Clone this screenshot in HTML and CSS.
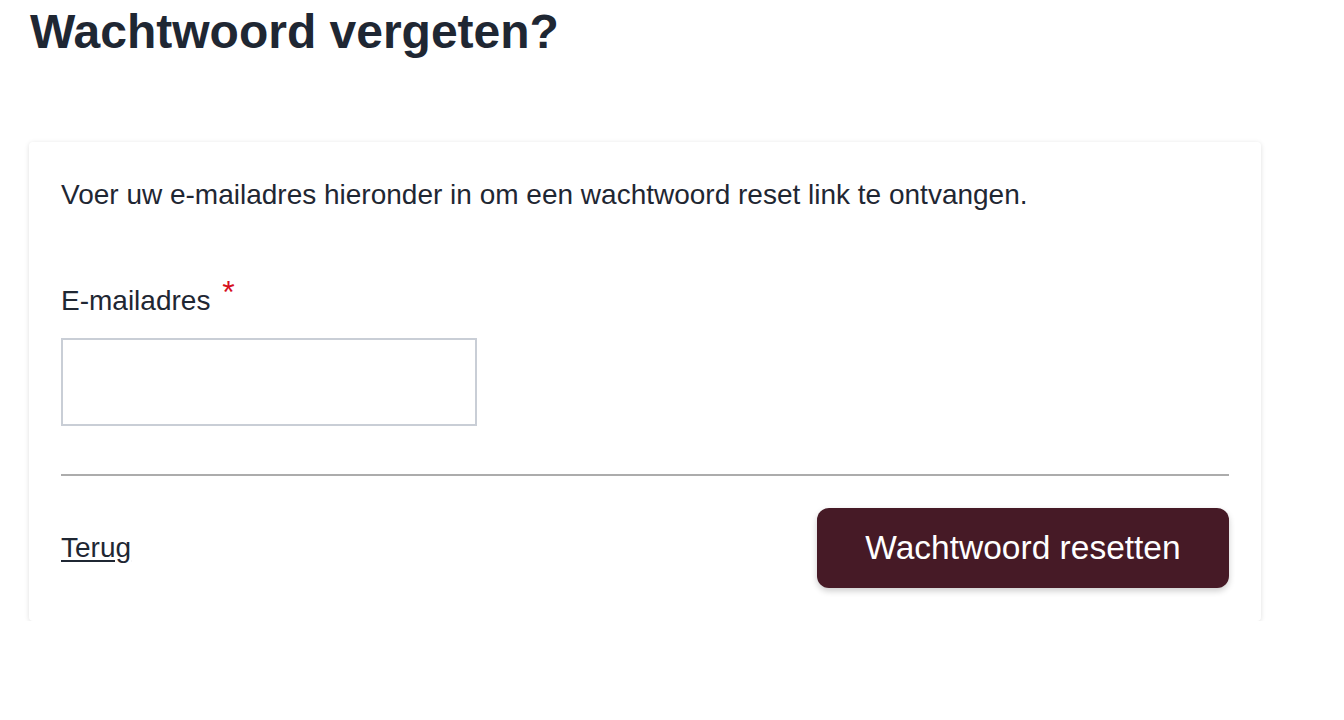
FILE: index.html
```html
<!DOCTYPE html>
<html lang="nl">
<head>
<meta charset="utf-8">
<title>Wachtwoord vergeten?</title>
<link rel="stylesheet" href="styles.css">
</head>
<body>
<main class="page">
  <h1 class="title">Wachtwoord vergeten?</h1>
  <form class="card">
    <p class="intro">Voer uw e-mailadres hieronder in om een wachtwoord reset link te ontvangen.</p>
    <div class="field">
      <label class="label" for="email">E-mailadres <span class="req">*</span></label>
      <input class="input" id="email" type="email">
    </div>
    <hr class="divider">
    <div class="actions">
      <a class="back" href="#">Terug</a>
      <button class="btn" type="button">Wachtwoord resetten</button>
    </div>
  </form>
</main>
</body>
</html>
```
FILE: styles.css
```css
* { box-sizing: border-box; }
html, body { margin: 0; padding: 0; background: #fff; }
body {
  font-family: "Liberation Sans", Arial, Helvetica, sans-serif;
  color: #1f2733;
}
.page {
  padding: 0 83px 0 29px;
}
.title {
  margin: 0;
  padding-top: 2px;
  padding-left: 1px;
  font-size: 48px;
  line-height: 60px;
  font-weight: 700;
  color: #1f2733;
}
.card {
  margin-top: 80px;
  background: #fff;
  border-radius: 4px;
  box-shadow: 0 1px 5px rgba(0,0,0,0.13);
  padding: 33px 32px 33px 32px;
}
.intro {
  margin: 0;
  font-size: 28px;
  line-height: 40px;
}
.field {
  margin-top: 67px;
}
.label {
  display: block;
  font-size: 28px;
  line-height: 38px;
}
.req {
  color: #d6101e;
  font-size: 32px;
  line-height: 0;
  margin-left: 4px;
  position: relative;
  top: -7px;
}
.input {
  display: block;
  margin-top: 18px;
  width: 416px;
  height: 88px;
  border: 2px solid #c9ced6;
  border-radius: 0;
  background: #fff;
  font: inherit;
}
.divider {
  margin: 48px 0 0 0;
  border: 0;
  border-top: 2px solid #acacac;
}
.actions {
  margin-top: 32px;
  display: flex;
  justify-content: space-between;
  align-items: center;
}
.back {
  font-size: 28px;
  color: #1f2733;
  text-decoration: underline;
  text-underline-offset: 3px;
}
.btn {
  width: 412px;
  height: 80px;
  border: 0;
  border-radius: 12px;
  background: #461a26;
  color: #fff;
  font-family: "Liberation Sans", Arial, Helvetica, sans-serif;
  font-size: 33.5px;
  box-shadow: 0 3px 6px rgba(0,0,0,0.2);
  cursor: pointer;
}
```
